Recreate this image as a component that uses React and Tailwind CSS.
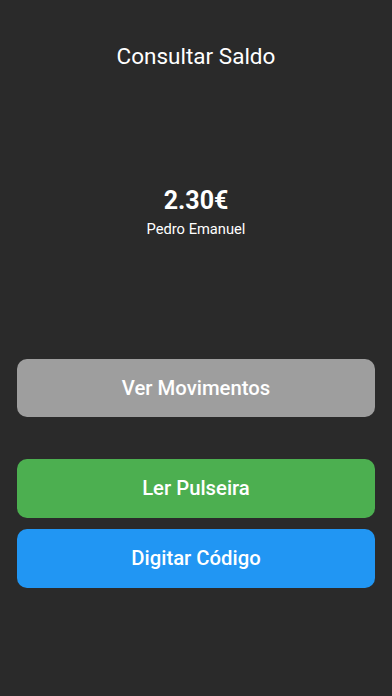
export default function App() {
  return (
    <div
      className="min-h-[696px] w-full bg-[#2a2a2a] text-white flex flex-col px-[17px]"
      style={{ fontFamily: 'Roboto, "Noto Sans", sans-serif' }}
    >
      <h1 className="mt-[42px] text-center text-[22.5px] leading-[28px] font-normal">Consultar Saldo</h1>

      <div className="mt-[117px] flex flex-col items-center">
        <div className="text-[25px] leading-[28px] font-bold">2.30€</div>
        <div className="mt-[4px] text-[14.7px] leading-[20px]">Pedro Emanuel</div>
      </div>

      <button className="mt-[120px] h-[58px] w-full rounded-[10px] bg-[#9e9e9e] text-[20.3px] font-medium">
        Ver Movimentos
      </button>
      <button className="mt-[42px] h-[59px] w-full rounded-[10px] bg-[#4caf50] text-[20.3px] font-medium">
        Ler Pulseira
      </button>
      <button className="mt-[11px] h-[59px] w-full rounded-[10px] bg-[#2196f3] text-[20.3px] font-medium">
        Digitar Código
      </button>
    </div>
  );
}
